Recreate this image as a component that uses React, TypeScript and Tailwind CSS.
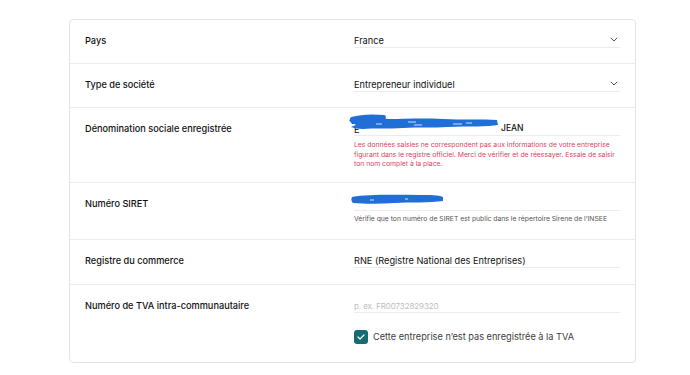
import React from "react";

const font = { fontFamily: "Inter, 'Noto Sans', sans-serif" };

function Chevron() {
  return (
    <svg width="8" height="5" viewBox="0 0 8 5" className="shrink-0 mb-[3px]">
      <path d="M0.8 0.8 L4 4 L7.2 0.8" fill="none" stroke="#555" strokeWidth="1" />
    </svg>
  );
}

function Row({ label, children, last }: { label: string; children: React.ReactNode; last?: boolean }) {
  return (
    <div className={`flex px-[15px] pt-[14px] ${last ? "" : "border-b border-[#ececec]"}`}>
      <div className="w-[269px] shrink-0 text-[9.2px] leading-[14px] font-medium text-[#111]">{label}</div>
      <div className="flex-1 min-w-0">{children}</div>
    </div>
  );
}

function Field({ children, className = "" }: { children: React.ReactNode; className?: string }) {
  return (
    <div className={`flex items-center justify-between h-[14px] border-b border-[#ececec] text-[9.2px] leading-[14px] ${className}`}>
      {children}
    </div>
  );
}

export default function App() {
  return (
    <div className="w-[690px] h-[375px] bg-white pt-[19px] pl-[69px]" style={font}>
      <div className="w-[567px] border border-[#e3e3e3] rounded-[4px] bg-white">
        <Row label="Pays">
          <div className="pb-[15px]">
            <Field className="text-[#111]">
              <span>France</span>
              <span className="mr-[2px]"><Chevron /></span>
            </Field>
          </div>
        </Row>
        <Row label="Type de société">
          <div className="pb-[15px]">
            <Field className="text-[#111]">
              <span>Entrepreneur individuel</span>
              <span className="mr-[2px]"><Chevron /></span>
            </Field>
          </div>
        </Row>
        <Row label="Dénomination sociale enregistrée">
          <div className="pb-[13px]">
            <Field className="text-[#111]">
              <div className="relative w-[175px] h-[14px]">
                <span className="absolute left-0 top-[1px]">E</span>
                <span className="absolute left-[147px] top-[-1px] text-[8.5px] font-medium">JEAN</span>
                <svg className="absolute left-[-6px] top-[-9px]" width="155" height="20" viewBox="0 0 155 20">
                  <path
                    d="M1 7 C6 4 14 4 22 4 C30 4 36 5 40 6 C55 6 75 5 95 6 C115 7 135 6 149 7 L150 12 C140 14 120 13 100 14 C85 15 70 14 55 15 C40 16 25 15 15 16 C10 16 6 15 3 14 C8 12 10 11 4 11 Z"
                    fill="#1f6fd6"
                  />
                  <path d="M4 6 C14 3 26 3 36 4" stroke="#1f6fd6" strokeWidth="4" fill="none" strokeLinecap="round" />
                  <path d="M28 11 L34 11 M60 9 L68 9 M66 12 L74 12 M105 11 L114 11 M118 10 L124 10" stroke="#cfe0fb" strokeWidth="1" />
                </svg>
              </div>
            </Field>
            <p className="mt-[4px] text-[6.8px] leading-[9.5px] text-[#d8445f] pr-[4px]">
              Les données saisies ne correspondent pas aux informations de votre entreprise figurant dans le registre officiel. Merci de vérifier et de réessayer. Essaie de saisir ton nom complet à la place.
            </p>
          </div>
        </Row>
        <Row label="Numéro SIRET">
          <div className="pb-[16px]">
            <Field>
              <div className="relative w-[100px] h-[14px]">
                <svg className="absolute left-[-4px] top-[-5px]" width="96" height="16" viewBox="0 0 96 16">
                  <path
                    d="M2 6 C20 3 45 4 70 4 C80 4 88 4 93 6 L93 10 C80 12 60 11 45 12 C30 13 15 13 3 12 C1 10 1 8 2 6 Z"
                    fill="#1f6fd6"
                  />
                  <path d="M20 9 L24 9 M55 8 L58 8" stroke="#dbe6fb" strokeWidth="1" />
                </svg>
              </div>
            </Field>
            <p className="mt-[3px] text-[6.8px] leading-[9.5px] text-[#555]">
              Vérifie que ton numéro de SIRET est public dans le répertoire Sirene de l’INSEE
            </p>
          </div>
        </Row>
        <Row label="Registre du commerce">
          <div className="pb-[16px]">
            <Field className="text-[#111]">
              <span>RNE (Registre National des Entreprises)</span>
            </Field>
          </div>
        </Row>
        <Row label="Numéro de TVA intra-communautaire" last>
          <div className="pb-[18px]">
            <Field className="text-[#bdbdbd]">
              <span className="text-[8px] tracking-[-0.1px]">p. ex. FR00732829320</span>
            </Field>
            <div className="mt-[17px] flex items-center gap-[5px]">
              <div className="w-[14px] h-[14px] rounded-[3px] bg-[#176b73] flex items-center justify-center">
                <svg width="8" height="6" viewBox="0 0 8 6">
                  <path d="M1 3 L3 5 L7 1" fill="none" stroke="white" strokeWidth="1.2" strokeLinecap="round" strokeLinejoin="round" />
                </svg>
              </div>
              <span className="text-[9.2px] leading-[14px] text-[#3d3d3d]">Cette entreprise n’est pas enregistrée à la TVA</span>
            </div>
          </div>
        </Row>
      </div>
    </div>
  );
}
